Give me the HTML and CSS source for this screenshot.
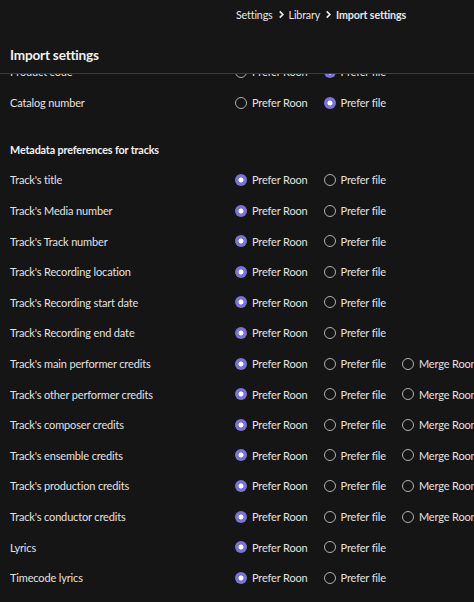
FILE: index.html
```html
<!DOCTYPE html>
<html>
<head>
<meta charset="utf-8">
<link rel="stylesheet" href="styles.css">
</head>
<body>
<header class="topbar">
  <nav class="crumbs">
    <span>Settings</span>
    <svg class="chev" viewBox="0 0 8 10" width="7" height="9"><path d="M2 1.5 L5.5 5 L2 8.5" fill="none" stroke="#e6e6e6" stroke-width="2"/></svg>
    <span>Library</span>
    <svg class="chev" viewBox="0 0 8 10" width="7" height="9"><path d="M2 1.5 L5.5 5 L2 8.5" fill="none" stroke="#e6e6e6" stroke-width="2"/></svg>
    <span class="current">Import settings</span>
  </nav>
  <h1 class="title">Import settings</h1>
</header>

<main class="content">
  <div class="row">
    <div class="label">Product code</div>
    <div class="opts">
      <span class="opt"><span class="radio"></span>Prefer Roon</span>
      <span class="opt"><span class="radio on"></span>Prefer file</span>
    </div>
  </div>
  <div class="row">
    <div class="label">Catalog number</div>
    <div class="opts">
      <span class="opt"><span class="radio"></span>Prefer Roon</span>
      <span class="opt"><span class="radio on"></span>Prefer file</span>
    </div>
  </div>

  <h2 class="section">Metadata preferences for tracks</h2>

  <div class="row"><div class="label">Track's title</div><div class="opts"><span class="opt"><span class="radio on"></span>Prefer Roon</span><span class="opt"><span class="radio"></span>Prefer file</span></div></div>
  <div class="row"><div class="label">Track's Media number</div><div class="opts"><span class="opt"><span class="radio on"></span>Prefer Roon</span><span class="opt"><span class="radio"></span>Prefer file</span></div></div>
  <div class="row"><div class="label">Track's Track number</div><div class="opts"><span class="opt"><span class="radio on"></span>Prefer Roon</span><span class="opt"><span class="radio"></span>Prefer file</span></div></div>
  <div class="row"><div class="label">Track's Recording location</div><div class="opts"><span class="opt"><span class="radio on"></span>Prefer Roon</span><span class="opt"><span class="radio"></span>Prefer file</span></div></div>
  <div class="row"><div class="label">Track's Recording start date</div><div class="opts"><span class="opt"><span class="radio on"></span>Prefer Roon</span><span class="opt"><span class="radio"></span>Prefer file</span></div></div>
  <div class="row"><div class="label">Track's Recording end date</div><div class="opts"><span class="opt"><span class="radio on"></span>Prefer Roon</span><span class="opt"><span class="radio"></span>Prefer file</span></div></div>
  <div class="row"><div class="label">Track's main performer credits</div><div class="opts"><span class="opt"><span class="radio on"></span>Prefer Roon</span><span class="opt"><span class="radio"></span>Prefer file</span><span class="opt"><span class="radio"></span>Merge Roon and file</span></div></div>
  <div class="row"><div class="label">Track's other performer credits</div><div class="opts"><span class="opt"><span class="radio on"></span>Prefer Roon</span><span class="opt"><span class="radio"></span>Prefer file</span><span class="opt"><span class="radio"></span>Merge Roon and file</span></div></div>
  <div class="row"><div class="label">Track's composer credits</div><div class="opts"><span class="opt"><span class="radio on"></span>Prefer Roon</span><span class="opt"><span class="radio"></span>Prefer file</span><span class="opt"><span class="radio"></span>Merge Roon and file</span></div></div>
  <div class="row"><div class="label">Track's ensemble credits</div><div class="opts"><span class="opt"><span class="radio on"></span>Prefer Roon</span><span class="opt"><span class="radio"></span>Prefer file</span><span class="opt"><span class="radio"></span>Merge Roon and file</span></div></div>
  <div class="row"><div class="label">Track's production credits</div><div class="opts"><span class="opt"><span class="radio on"></span>Prefer Roon</span><span class="opt"><span class="radio"></span>Prefer file</span><span class="opt"><span class="radio"></span>Merge Roon and file</span></div></div>
  <div class="row"><div class="label">Track's conductor credits</div><div class="opts"><span class="opt"><span class="radio on"></span>Prefer Roon</span><span class="opt"><span class="radio"></span>Prefer file</span><span class="opt"><span class="radio"></span>Merge Roon and file</span></div></div>
  <div class="row"><div class="label">Lyrics</div><div class="opts"><span class="opt"><span class="radio on"></span>Prefer Roon</span><span class="opt"><span class="radio"></span>Prefer file</span></div></div>
  <div class="row"><div class="label">Timecode lyrics</div><div class="opts"><span class="opt"><span class="radio on"></span>Prefer Roon</span><span class="opt"><span class="radio"></span>Prefer file</span></div></div>
</main>
</body>
</html>
```

FILE: styles.css
```css
html, body {
  margin: 0;
  padding: 0;
  background: #151515;
  overflow: hidden;
}
body {
  font-family: Lato, "Noto Sans", sans-serif;
  color: #e2e2e2;
  width: 474px;
  height: 602px;
}
.topbar {
  position: fixed;
  top: 0;
  left: 0;
  right: 0;
  height: 74px;
  background: #161616;
  border-bottom: 1px solid #3a3a3a;
  box-sizing: border-box;
  z-index: 2;
}
.crumbs {
  display: flex;
  align-items: center;
  gap: 3px;
  padding: 6px 0 0 236px;
  height: 16px;
  font-size: 10.7px;
  letter-spacing: -0.15px;
  color: #e6e6e6;
}
.crumbs .chev {
  margin: 0 1px 0 2px;
}
.crumbs .current {
  font-weight: 700;
}
.title {
  margin: 0;
  padding: 23px 0 0 10px;
  font-size: 13.6px;
  letter-spacing: -0.2px;
  font-weight: 700;
  line-height: 20px;
  color: #f0f0f0;
}
.content {
  padding-top: 56.7px;
  white-space: nowrap;
}
.row {
  display: flex;
  align-items: center;
  height: 30.6px;
  font-size: 11px;
  letter-spacing: -0.15px;
}
.label {
  width: 225px;
  padding-left: 10px;
  flex: none;
}
.opts {
  display: flex;
  gap: 16px;
}
.opt {
  display: flex;
  align-items: center;
  gap: 5px;
}
.radio {
  width: 12px;
  height: 12px;
  border-radius: 50%;
  border: 1.5px solid #b0b0b0;
  box-sizing: border-box;
  flex: none;
}
.radio.on {
  border: none;
  background: radial-gradient(circle, #ffffff 0 2.2px, #7a72d8 2.8px);
}
.section {
  margin: 0;
  padding: 24px 0 6.8px 10px;
  font-size: 10.8px;
  letter-spacing: -0.15px;
  line-height: 16px;
  font-weight: 700;
  color: #f0f0f0;
}
```
